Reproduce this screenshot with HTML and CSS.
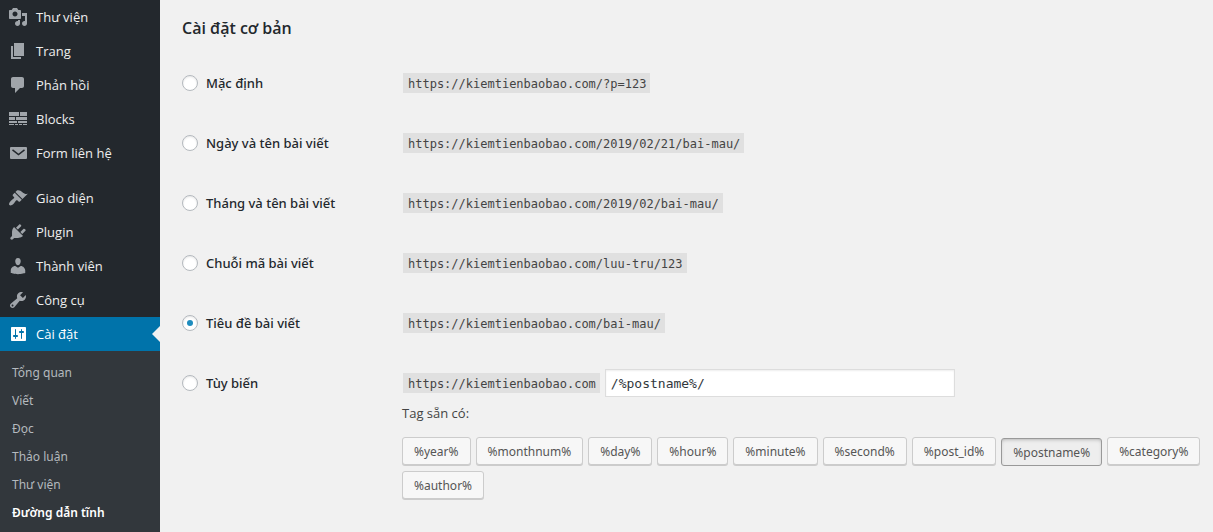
FILE: index.html
```
<!DOCTYPE html>
<html lang="vi">
<head>
<meta charset="utf-8">
<title>Đường dẫn tĩnh</title>
<link rel="stylesheet" href="styles.css">
</head>
<body>
<div class="layout">
  <nav class="sidebar" aria-label="Menu chính">
    <ul class="menu">
      <li><a class="menu-link" href="#"><svg class="icon" viewBox="0 0 20 20" aria-hidden="true"><path d="M13 11V4c0-.55-.45-1-1-1h-1.67L9 1H5L3.67 3H2c-.55 0-1 .45-1 1v7c0 .55.45 1 1 1h10c.55 0 1-.45 1-1zM7 4.5c1.38 0 2.5 1.12 2.5 2.5S8.38 9.5 7 9.5 4.5 8.38 4.5 7 5.62 4.5 7 4.5zM14 6h5v10.5c0 1.38-1.12 2.5-2.5 2.5S14 17.88 14 16.5s1.12-2.5 2.5-2.5c.17 0 .34.02.5.05V9h-3V6zm-4 8.05V13h2v3.5c0 1.38-1.12 2.5-2.5 2.5S7 17.88 7 16.5 8.12 14 9.5 14c.17 0 .34.02.5.05z"/></svg>Thư viện</a></li>
      <li><a class="menu-link" href="#"><svg class="icon" viewBox="0 0 20 20" aria-hidden="true"><path d="M6 15V2h10v13H6zm-1 1h8v2H3V5h2v11z"/></svg>Trang</a></li>
      <li><a class="menu-link" href="#"><svg class="icon" viewBox="0 0 20 20" aria-hidden="true"><path d="M5 2h9c1.100 0 2 .9 2 2v7c0 1.100-.9 2-2 2h-2l-5 5v-5H5c-1.100 0-2-.9-2-2V4c0-1.100.9-2 2-2z"/></svg>Phản hồi</a></li>
      <li><a class="menu-link" href="#"><svg class="icon" viewBox="0 0 20 20" aria-hidden="true"><path d="M1 3h10v4H1zM12 3h7v4h-7zM1 8h6v3H1zM8 8h11v3H8zM1 12h8v2H1zM10 12h9v2h-9zM1 15h5v1H1zM7 15h3v1H7zM11 15h3v1h-3zM15 15h4v1h-4z"/></svg>Blocks</a></li>
      <li><a class="menu-link" href="#"><svg class="icon" viewBox="0 0 20 20" aria-hidden="true"><rect x="2" y="4" width="17" height="12" rx="1"/><path class="icon-line" d="M4.500 6.800l6 4.700 6-4.700"/></svg>Form liên hệ</a></li>
    </ul>
    <ul class="menu">
      <li><a class="menu-link" href="#"><svg class="icon" viewBox="0 0 20 20" aria-hidden="true"><path d="M14.48 11.06L7.41 3.99l1.5-1.5c.5-.56 2.3-.47 3.51.32 1.21.8 1.43 1.28 2.91 2.1 1.18.64 2.45 1.26 4.45.85zm-.71.71L6.7 4.7 4.93 6.47c-.39.39-.39 1.02 0 1.41l1.06 1.06c.39.39.39 1.03 0 1.42-.6.6-1.43 1.11-2.21 1.69-.35.26-.7.53-1.01.84C1.43 14.23.4 16.08 1.4 17.07c.99 1 2.84-.03 4.18-1.36.31-.31.58-.66.85-1.02.57-.78 1.08-1.61 1.69-2.21.39-.39 1.02-.39 1.41 0l1.06 1.06c.39.39 1.02.39 1.41 0z"/></svg>Giao diện</a></li>
      <li><a class="menu-link" href="#"><svg class="icon" viewBox="0 0 20 20" aria-hidden="true"><path d="M13.11 4.36L9.87 7.6 8 5.73l3.24-3.24c.35-.34 1.05-.2 1.56.32.52.51.66 1.21.31 1.55zm-8 1.77l.91-1.12 9.01 9.01-1.19.84c-.71.71-2.63 1.16-3.82 1.16H6.14L4.9 17.26c-.59.59-1.54.59-2.12 0-.59-.58-.59-1.53 0-2.12l1.24-1.24v-3.88c0-1.13.4-3.19 1.09-3.89zm7.26 3.97l3.24-3.24c.34-.35 1.04-.21 1.55.31.52.51.66 1.21.31 1.55l-3.24 3.25z"/></svg>Plugin</a></li>
      <li><a class="menu-link" href="#"><svg class="icon" viewBox="0 0 20 20" aria-hidden="true"><path d="M10 9.25c-2.27 0-2.73-3.44-2.73-3.44C7 4.02 7.82 2 9.97 2c2.16 0 2.98 2.02 2.71 3.81 0 0-.41 3.44-2.68 3.44zm0 2.57L12.72 10c2.39 0 4.52 2.33 4.52 4.53v2.49s-3.65 1.13-7.24 1.13c-3.65 0-7.24-1.13-7.24-1.13v-2.49c0-2.25 1.94-4.48 4.47-4.48z"/></svg>Thành viên</a></li>
      <li><a class="menu-link" href="#"><svg class="icon" viewBox="0 0 20 20" aria-hidden="true"><path d="M16.68 9.77c-1.34 1.34-3.3 1.67-4.95.99l-5.41 6.52c-.99.99-2.59.99-3.58 0s-.99-2.59 0-3.57l6.52-5.42c-.68-1.65-.35-3.61.99-4.95 1.28-1.28 3.12-1.62 4.72-1.06l-2.89 2.89 2.82 2.82 2.86-2.87c.53 1.58.18 3.39-1.08 4.65zM3.81 16.21c.4.39 1.04.39 1.43 0 .4-.4.4-1.04 0-1.43-.39-.4-1.03-.4-1.43 0-.39.39-.39 1.03 0 1.43z"/></svg>Công cụ</a></li>
      <li>
        <a class="menu-link menu-link-current" href="#"><svg class="icon" viewBox="0 0 20 20" aria-hidden="true"><path d="M18 16V4c0-.55-.45-1-1-1H4c-.55 0-1 .45-1 1v12c0 .55.45 1 1 1h13c.55 0 1-.45 1-1zM8 11h1c.55 0 1 .45 1 1s-.45 1-1 1H8v1.500c0 .28-.22.5-.5.5s-.5-.22-.5-.5V13H6c-.55 0-1-.45-1-1s.45-1 1-1h1V5.500c0-.28.22-.5.5-.5s.5.22.5.5V11zm5-2h-1c-.55 0-1-.45-1-1s.45-1 1-1h1V5.500c0-.28.22-.5.5-.5s.5.22.5.5V7h1c.55 0 1 .45 1 1s-.45 1-1 1h-1v5.500c0 .28-.22.5-.5.5s-.5-.22-.5-.5V9z"/></svg>Cài đặt</a>
        <ul class="submenu">
          <li><a class="submenu-link" href="#">Tổng quan</a></li>
          <li><a class="submenu-link" href="#">Viết</a></li>
          <li><a class="submenu-link" href="#">Đọc</a></li>
          <li><a class="submenu-link" href="#">Thảo luận</a></li>
          <li><a class="submenu-link" href="#">Thư viện</a></li>
          <li><a class="submenu-link submenu-link-current" href="#" aria-current="page">Đường dẫn tĩnh</a></li>
        </ul>
      </li>
    </ul>
  </nav>
  <main class="content">
    <h2 class="title">Cài đặt cơ bản</h2>
    <form class="options">
      <div class="option"><label class="choice"><input class="radio" type="radio" name="structure">Mặc định</label><div class="value"><code class="url">https://kiemtienbaobao.com/?p=123</code></div></div>
      <div class="option"><label class="choice"><input class="radio" type="radio" name="structure">Ngày và tên bài viết</label><div class="value"><code class="url">https://kiemtienbaobao.com/2019/02/21/bai-mau/</code></div></div>
      <div class="option"><label class="choice"><input class="radio" type="radio" name="structure">Tháng và tên bài viết</label><div class="value"><code class="url">https://kiemtienbaobao.com/2019/02/bai-mau/</code></div></div>
      <div class="option"><label class="choice"><input class="radio" type="radio" name="structure">Chuỗi mã bài viết</label><div class="value"><code class="url">https://kiemtienbaobao.com/luu-tru/123</code></div></div>
      <div class="option"><label class="choice"><input class="radio" type="radio" name="structure" checked>Tiêu đề bài viết</label><div class="value"><code class="url">https://kiemtienbaobao.com/bai-mau/</code></div></div>
      <div class="option">
        <label class="choice"><input class="radio" type="radio" name="structure">Tùy biến</label>
        <div class="value">
          <div class="custom"><code class="url">https://kiemtienbaobao.com</code><input class="custom-input" type="text" value="/%postname%/" aria-label="Cấu trúc tùy biến"></div>
          <p class="tags-label">Tag sẵn có:</p>
          <div class="tags">
            <button class="tag" type="button">%year%</button>
            <button class="tag" type="button">%monthnum%</button>
            <button class="tag" type="button">%day%</button>
            <button class="tag" type="button">%hour%</button>
            <button class="tag" type="button">%minute%</button>
            <button class="tag" type="button">%second%</button>
            <button class="tag" type="button">%post_id%</button>
            <button class="tag tag-active" type="button" aria-pressed="true">%postname%</button>
            <button class="tag" type="button">%category%</button>
            <button class="tag" type="button">%author%</button>
          </div>
        </div>
      </div>
    </form>
  </main>
</div>
</body>
</html>
```
FILE: styles.css
```
* {
  box-sizing: border-box;
}

body {
  margin: 0;
  background: #f1f1f1;
  color: #444;
  font: 13px/20px "Open Sans", "Noto Sans", sans-serif;
}

ul {
  margin: 0;
  padding: 0;
  list-style: none;
}

.layout {
  display: flex;
  height: 100vh;
  overflow: hidden;
}

/* Sidebar */
.sidebar {
  flex: 0 0 160px;
  display: flex;
  flex-direction: column;
  gap: 11px;
  background: #23282d;
}

.menu-link {
  display: flex;
  align-items: center;
  gap: 8px;
  height: 34px;
  padding: 0 8px;
  color: #eee;
  text-decoration: none;
}

.icon {
  width: 20px;
  height: 20px;
  fill: #a0a5aa;
}

.icon-line {
  fill: none;
  stroke: #23282d;
  stroke-width: 1.5;
}

.menu-link-current {
  position: relative;
  background: #0073aa;
  color: #fff;
}

.menu-link-current .icon {
  fill: #fff;
}

.menu-link-current::after {
  content: "";
  position: absolute;
  top: 9px;
  right: 0;
  border: 8px solid transparent;
  border-left-width: 0;
  border-right-color: #f1f1f1;
}

.submenu {
  padding: 8px 0;
  background: #32373c;
}

.submenu-link {
  display: block;
  padding: 4px 12px;
  color: #b4b9be;
  font-family: "Noto Sans", sans-serif;
  font-size: 12px;
  text-decoration: none;
}

.submenu-link-current {
  color: #fff;
  font-weight: 600;
}

/* Permalink settings */
.content {
  flex: 1;
  min-width: 0;
  padding: 16px 10px 0 22px;
}

.title {
  margin: 0 0 13px;
  color: #23282d;
  font-size: 16px;
  line-height: 24px;
  font-weight: 600;
}

.option {
  display: grid;
  grid-template-columns: 220px 1fr;
  align-items: start;
  padding: 14px 0;
}

.choice {
  display: flex;
  align-items: center;
  gap: 8px;
  height: 32px;
  color: #23282d;
  font-family: "Noto Sans", sans-serif;
  font-weight: 500;
}

.radio {
  appearance: none;
  display: grid;
  place-content: center;
  width: 16px;
  height: 16px;
  margin: 0;
  border: 1px solid #b4b9be;
  border-radius: 50%;
  background: #fff;
  box-shadow: inset 0 1px 2px rgba(0, 0, 0, 0.1);
}

.radio:checked::before {
  content: "";
  width: 6px;
  height: 6px;
  border-radius: 50%;
  background: #1e8cbe;
}

.value {
  display: flex;
  flex-direction: column;
  justify-content: center;
  min-height: 32px;
}

.url {
  align-self: start;
  margin: 0 1px;
  padding: 2px 4px 0 5px;
  background: #e0e0e0;
  font: 12px/18px "DejaVu Sans Mono", monospace;
}

.custom {
  display: flex;
  align-items: center;
  gap: 4px;
  padding: 2px 0 0;
}

.custom .url {
  align-self: center;
}

.custom-input {
  width: 350px;
  height: 28px;
  padding: 0 5px;
  border: 1px solid #ddd;
  background: #fff;
  box-shadow: inset 0 1px 2px rgba(0, 0, 0, 0.07);
  color: #32373c;
  font: 13px "DejaVu Sans Mono", monospace;
}

.tags-label {
  margin: 6px 0 14px;
}

.tags {
  display: flex;
  flex-wrap: wrap;
  gap: 6px 5px;
}

.tag {
  height: 28px;
  padding: 0 11px;
  border: 1px solid #ccc;
  border-radius: 3px;
  background: #f7f7f7;
  box-shadow: 0 1px 0 #ccc;
  color: #555;
  font: 12px "Noto Sans", sans-serif;
}

.tag-active {
  transform: translateY(1px);
  border-color: #999;
  background: #eee;
  box-shadow: inset 0 2px 5px -3px rgba(0, 0, 0, 0.5);
}
```
